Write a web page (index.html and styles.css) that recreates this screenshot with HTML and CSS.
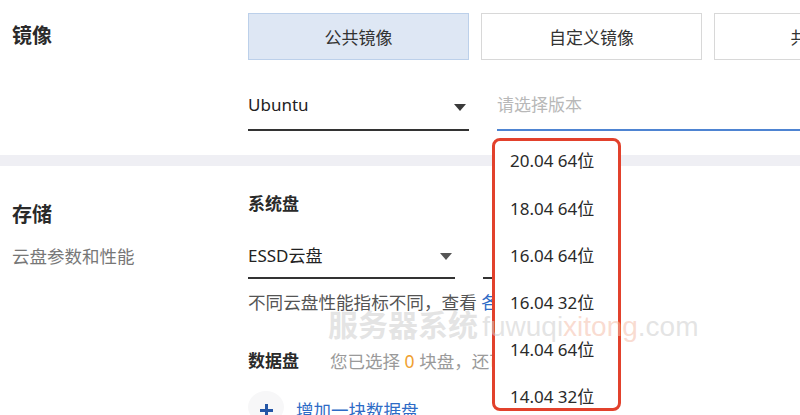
FILE: index.html
```html
<!DOCTYPE html>
<html lang="zh-CN">
<head>
<meta charset="utf-8">
<title>镜像与存储</title>
<link rel="stylesheet" href="styles.css">
</head>
<body>
<div class="page">
  <section class="sec sec-image">
    <div class="label-col">
      <h2 class="label">镜像</h2>
    </div>
    <div class="content-col">
      <div class="tabs">
        <button class="tab active">公共镜像</button>
        <button class="tab">自定义镜像</button>
        <button class="tab">共享镜像</button>
      </div>
      <div class="selects">
        <div class="select os">
          <span class="val">Ubuntu</span>
          <span class="caret"></span>
        </div>
        <div class="select version">
          <span class="placeholder">请选择版本</span>
        </div>
      </div>
    </div>
  </section>

  <div class="band"></div>

  <section class="sec sec-storage">
    <div class="label-col">
      <h2 class="label">存储</h2>
      <p class="sub">云盘参数和性能</p>
    </div>
    <div class="content-col">
      <h3 class="subtitle">系统盘</h3>
      <div class="disk-row">
        <div class="select disk">
          <span class="val">ESSD云盘</span>
          <span class="caret small"></span>
        </div>
        <div class="select size"></div>
      </div>
      <p class="desc">不同云盘性能指标不同，查看 <a class="link">各云</a></p>
      <div class="data-row">
        <h3 class="subtitle">数据盘</h3>
        <span class="hint">您已选择 <em class="num">0</em> 块盘，还可</span>
      </div>
      <div class="add-row">
        <span class="plus-wrap">
          <svg width="15" height="15" viewBox="0 0 15 15"><path d="M7.5 1v13M1 7.5h13" stroke="#2456a6" stroke-width="3" fill="none"/></svg>
        </span>
        <span class="add-text">增加一块数据盘</span>
      </div>
    </div>
  </section>

  <ul class="dropdown">
    <li>20.04 64位</li>
    <li>18.04 64位</li>
    <li>16.04 64位</li>
    <li>16.04 32位</li>
    <li>14.04 64位</li>
    <li>14.04 32位</li>
  </ul>

  <div class="watermark"><b>服务器系统</b> <span class="wm-l">fuwuqi<span class="wm-c">xitong</span>.com</span></div>
</div>
</body>
</html>
```

FILE: styles.css
```css
* { box-sizing: border-box; }
html, body {
  margin: 0;
  padding: 0;
  background: #fff;
  overflow: hidden;
}
body {
  width: 800px;
  height: 415px;
  font-family: "Noto Sans", "Noto Sans CJK SC", sans-serif;
  color: #333;
}
.page {
  position: relative;
  width: 800px;
  height: 415px;
  overflow: hidden;
}
.sec {
  display: flex;
}
.label-col {
  width: 248px;
  flex-shrink: 0;
  padding-left: 12px;
}
.content-col {
  flex: 1;
  min-width: 0;
}
.label {
  margin: 0;
  font-size: 20px;
  font-weight: 700;
  line-height: 24px;
  color: #2a2a2a;
}

/* image section */
.sec-image {
  height: 155px;
}
.sec-image .label-col { padding-top: 24px; }
.sec-image .content-col { padding-top: 13px; }
.tabs {
  display: flex;
  gap: 12px;
}
.tab {
  flex-shrink: 0;
  width: 221px;
  height: 47px;
  border: 1.5px solid #d8d8d8;
  background: #fff;
  font-family: inherit;
  font-size: 17px;
  color: #333;
  padding: 0;
}
.tab.active {
  background: #dee7f4;
  border: 1px solid #bcd0ea;
}
.selects {
  display: flex;
  gap: 28px;
  margin-top: 33px;
}
.select {
  position: relative;
  display: flex;
  align-items: center;
  height: 38px;
  padding-bottom: 12px;
  font-size: 17px;
  line-height: 24px;
  color: #222;
  border-bottom: 2px solid #333;
}
.select.os { width: 221px; flex-shrink: 0; }
.select.version {
  flex: 1;
  border-bottom-color: #4e84d2;
}
.placeholder { color: #b8b8b8; }
.caret {
  position: absolute;
  right: 3px;
  top: 11px;
  width: 0;
  height: 0;
  border-left: 6px solid transparent;
  border-right: 6px solid transparent;
  border-top: 7px solid #3a3a3a;
}
.caret.small {
  right: 3px;
  top: 9px;
  border-top-color: #555;
}

.band {
  height: 11px;
  background: #efeff4;
}

/* storage section */
.sec-storage .label-col { padding-top: 37px; }
.sec-storage .content-col { padding-top: 26px; }
.sub {
  margin: 17px 0 0;
  font-size: 17.5px;
  line-height: 24px;
  color: #777;
}
.subtitle {
  margin: 0;
  font-size: 17px;
  font-weight: 700;
  line-height: 24px;
  color: #2a2a2a;
}
.disk-row {
  display: flex;
  gap: 28px;
  margin-top: 28px;
}
.select.disk {
  width: 207px;
  flex-shrink: 0;
  height: 35px;
  padding-bottom: 9px;
}
.select.size {
  width: 120px;
  height: 35px;
}
.desc {
  margin: 11px 0 0;
  font-size: 17.6px;
  line-height: 24px;
  color: #555;
  white-space: nowrap;
}
.link { color: #2e6bc6; }
.data-row {
  display: flex;
  align-items: center;
  gap: 0;
  margin-top: 35px;
  white-space: nowrap;
}
.data-row .subtitle { width: 82px; }
.hint {
  font-size: 17.5px;
  line-height: 24px;
  color: #9a9a9a;
}
.num {
  font-style: normal;
  color: #f0a030;
}
.add-row {
  display: flex;
  align-items: center;
  margin-top: 18px;
}
.plus-wrap {
  width: 36px;
  height: 32px;
  border-radius: 50%;
  background: #f7f7f8;
  display: flex;
  align-items: center;
  justify-content: center;
  padding-top: 6px;
}
.add-text {
  margin-left: 12px;
  font-size: 17.5px;
  line-height: 24px;
  color: #2e6bc6;
  padding-top: 6px;
}

/* dropdown overlay */
.dropdown {
  position: absolute;
  left: 492px;
  top: 138px;
  width: 129px;
  height: 273px;
  margin: 0;
  padding: 0;
  list-style: none;
  background: #fff;
  border: 3px solid #e2412c;
  border-radius: 8px;
  overflow: hidden;
}
.dropdown li {
  height: 47.2px;
  line-height: 47.2px;
  padding-left: 15px;
  font-size: 17px;
  color: #2a2a2a;
  white-space: nowrap;
}
.dropdown li:first-child { margin-top: -3.6px; }

/* watermark */
.watermark {
  position: absolute;
  left: 328px;
  top: 305px;
  white-space: nowrap;
  line-height: 40px;
  color: rgba(205, 205, 205, 0.55);
  pointer-events: none;
}
.watermark b {
  font-size: 30px;
  font-weight: 700;
}
.wm-l {
  font-family: "Liberation Sans", sans-serif;
  font-size: 28px;
}
.wm-c { color: rgba(245, 190, 170, 0.55); }
```
